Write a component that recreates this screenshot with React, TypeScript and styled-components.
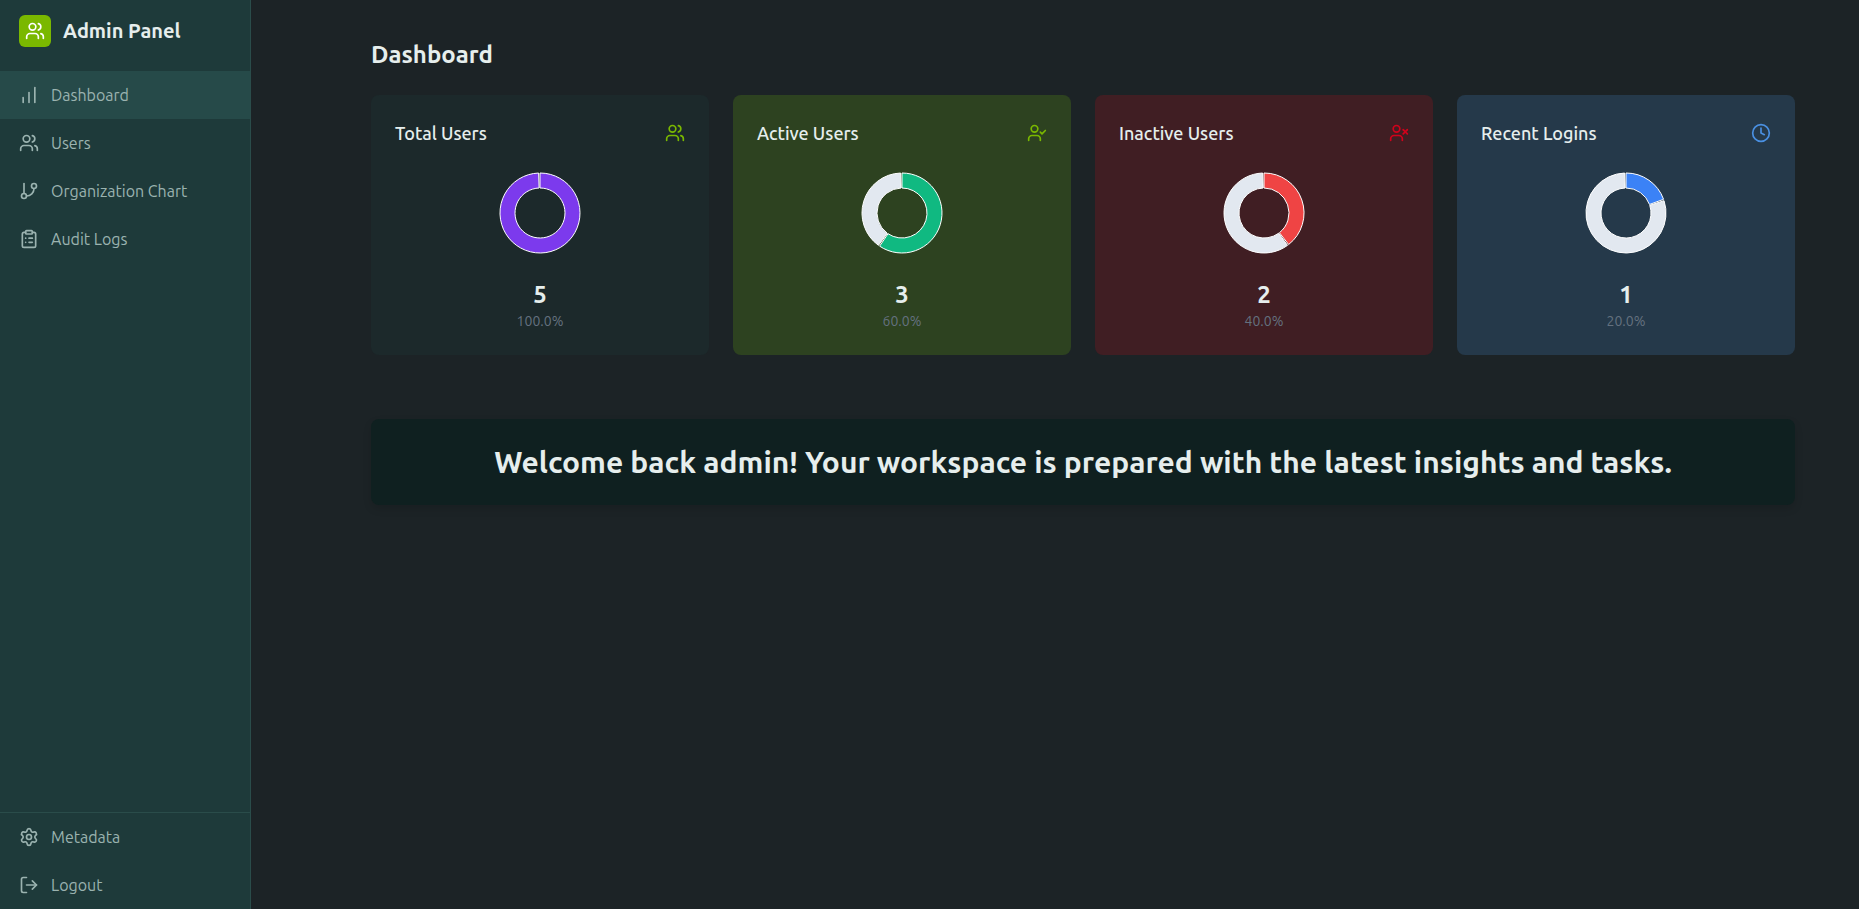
import React from 'react';
import styled, { createGlobalStyle } from 'styled-components';
import { Users, UserCheck, UserX, Clock, GitBranch, ClipboardList, LogOut, Settings, ChartNoAxesColumnIncreasing } from 'lucide-react';

const GlobalStyle = createGlobalStyle`
  *, *::before, *::after { box-sizing: border-box; }
  body {
    margin: 0;
    background: #1c2326;
    color: #e6eeed;
    font-family: Ubuntu, "Noto Sans", "Open Sans", sans-serif;
    font-size: 16px;
    line-height: 24px;
  }
`;

const Shell = styled.div`
  display: flex;
  min-height: 100vh;
`;

const Sidebar = styled.aside`
  display: flex;
  flex-direction: column;
  flex: none;
  width: 251px;
  background: #1e3a3a;
  border-right: 1px solid #2a4c4a;
`;

const Brand = styled.div`
  display: flex;
  align-items: center;
  gap: 12px;
  padding: 15px 19px 24px;
`;

const BrandMark = styled.span`
  display: grid;
  place-items: center;
  width: 32px;
  height: 32px;
  border-radius: 6px;
  background: #7ab800;
  color: #fff;
`;

const BrandName = styled.span`
  font-size: 20px;
  font-weight: 600;
`;

const Nav = styled.nav<{ $divided?: boolean }>`
  display: flex;
  flex-direction: column;
  ${({ $divided }) => $divided && 'margin-top: auto; border-top: 1px solid #2a4c4a;'}
`;

const NavLink = styled.a<{ $active?: boolean }>`
  display: flex;
  align-items: center;
  gap: 12px;
  height: 48px;
  padding: 0 19px;
  color: #9bb3b0;
  background: ${({ $active }) => ($active ? '#264a49' : 'transparent')};
  font-size: 16px;
  font-weight: 400;
  text-decoration: none;
`;

const Main = styled.main`
  flex: 1;
  min-width: 0;
  padding: 39px 64px 39px 120px;
`;

const Title = styled.h1`
  margin: 0 0 24px;
  font-size: 24px;
  line-height: 32px;
  font-weight: 600;
`;

const Cards = styled.section`
  display: grid;
  grid-template-columns: repeat(4, minmax(0, 1fr));
  gap: 24px;
`;

const Card = styled.article<{ $background: string }>`
  display: flex;
  flex-direction: column;
  align-items: center;
  height: 260px;
  padding: 24px;
  border-radius: 8px;
  background: ${({ $background }) => $background};
`;

const CardHeader = styled.header<{ $accent: string }>`
  display: flex;
  align-items: center;
  justify-content: space-between;
  width: 100%;
  height: 28px;
  color: ${({ $accent }) => $accent};
`;

const CardTitle = styled.h2`
  margin: 0;
  color: #e6eeed;
  font-size: 18px;
  line-height: 28px;
  font-weight: 500;
`;

const Chart = styled.svg`
  display: block;
  width: 96px;
  height: 96px;
  margin: 18px 0;
`;

const Value = styled.strong`
  font-size: 24px;
  line-height: 32px;
  font-weight: 600;
`;

const Percent = styled.span`
  color: #64717f;
  font-size: 14px;
  line-height: 20px;
`;

const Welcome = styled.section`
  margin-top: 64px;
  padding: 24px;
  border-radius: 8px;
  background: #0f2020;
  box-shadow: 0 4px 8px rgba(0, 0, 0, 0.12);
  text-align: center;
`;

const WelcomeText = styled.h2`
  margin: 0;
  font-size: 30px;
  line-height: 38px;
  font-weight: 600;
`;

const point = (angle: number, radius: number) => {
  const a = ((angle - 90) * Math.PI) / 180;
  return `${48 + radius * Math.cos(a)} ${48 + radius * Math.sin(a)}`;
};

const segment = (from: number, to: number) => {
  const large = to - from > 180 ? 1 : 0;
  return `M${point(from, 40)}A40 40 0 ${large} 1 ${point(to, 40)}L${point(to, 25)}A25 25 0 ${large} 0 ${point(from, 25)}Z`;
};

function Donut({ share, color, label }: { share: number; color: string; label: string }) {
  const end = share * 360;
  return (
    <Chart viewBox="0 0 96 96" role="img" aria-label={label}>
      <g stroke="#fff" strokeWidth="1">
        <path d={segment(0, end - 2)} fill={color} />
        {share < 1 && <path d={segment(end, 358)} fill="#e2e8f0" />}
      </g>
    </Chart>
  );
}

const stats = [
  { title: 'Total Users', value: 5, share: 1, color: '#7c3aed', accent: '#7ab800', background: '#1c292b', Icon: Users },
  { title: 'Active Users', value: 3, share: 0.6, color: '#10b981', accent: '#7ab800', background: '#2d4220', Icon: UserCheck },
  { title: 'Inactive Users', value: 2, share: 0.4, color: '#ef4444', accent: '#d0021b', background: '#401e23', Icon: UserX },
  { title: 'Recent Logins', value: 1, share: 0.2, color: '#3b82f6', accent: '#4a90e2', background: '#25394a', Icon: Clock },
];

const mainLinks = [
  { label: 'Dashboard', Icon: ChartNoAxesColumnIncreasing, active: true },
  { label: 'Users', Icon: Users },
  { label: 'Organization Chart', Icon: GitBranch },
  { label: 'Audit Logs', Icon: ClipboardList },
];

const footerLinks = [
  { label: 'Metadata', Icon: Settings },
  { label: 'Logout', Icon: LogOut },
];

export default function App() {
  return (
    <>
      <GlobalStyle />
      <Shell>
        <Sidebar>
          <Brand>
            <BrandMark><Users size={20} /></BrandMark>
            <BrandName>Admin Panel</BrandName>
          </Brand>
          <Nav aria-label="Main">
            {mainLinks.map(({ label, Icon, active }) => (
              <NavLink key={label} href="#" $active={active} aria-current={active ? 'page' : undefined}>
                <Icon size={20} />
                {label}
              </NavLink>
            ))}
          </Nav>
          <Nav $divided aria-label="Account">
            {footerLinks.map(({ label, Icon }) => (
              <NavLink key={label} href="#">
                <Icon size={20} />
                {label}
              </NavLink>
            ))}
          </Nav>
        </Sidebar>
        <Main>
          <Title>Dashboard</Title>
          <Cards>
            {stats.map(({ title, value, share, color, accent, background, Icon }) => (
              <Card key={title} $background={background}>
                <CardHeader $accent={accent}>
                  <CardTitle>{title}</CardTitle>
                  <Icon size={20} />
                </CardHeader>
                <Donut share={share} color={color} label={title} />
                <Value>{value}</Value>
                <Percent>{(share * 100).toFixed(1)}%</Percent>
              </Card>
            ))}
          </Cards>
          <Welcome>
            <WelcomeText>Welcome back admin! Your workspace is prepared with the latest insights and tasks.</WelcomeText>
          </Welcome>
        </Main>
      </Shell>
    </>
  );
}
